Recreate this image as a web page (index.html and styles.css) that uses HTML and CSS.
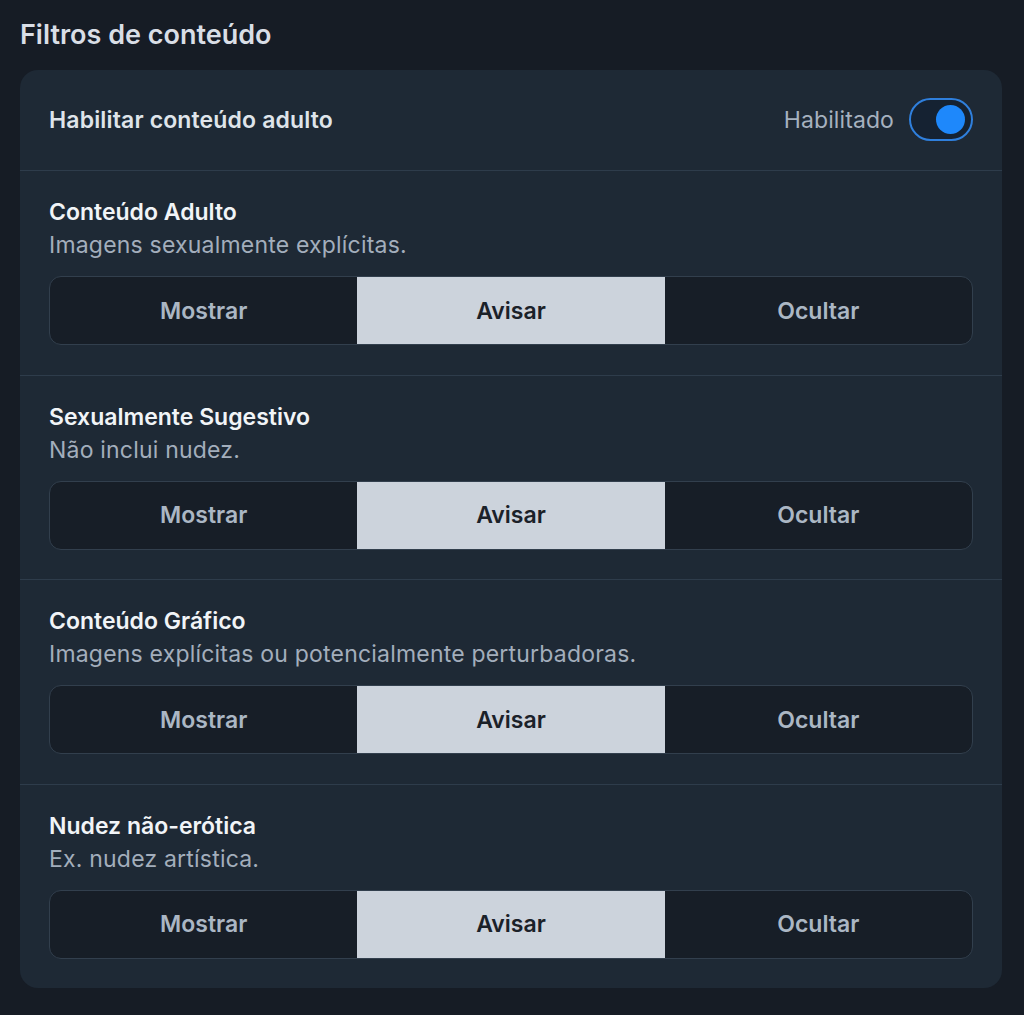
FILE: index.html
```html
<!DOCTYPE html>
<html lang="pt">
<head>
<meta charset="utf-8">
<link rel="stylesheet" href="styles.css">
</head>
<body>
<div class="page">
  <h1 class="page-title">Filtros de conteúdo</h1>
  <div class="card">
    <div class="header-row">
      <span class="header-label">Habilitar conteúdo adulto</span>
      <div class="toggle-wrap">
        <span class="toggle-text">Habilitado</span>
        <span class="toggle"><span class="knob"></span></span>
      </div>
    </div>
    <div class="section">
      <div class="sec-title">Conteúdo Adulto</div>
      <div class="sec-desc">Imagens sexualmente explícitas.</div>
      <div class="seg">
        <div class="seg-btn">Mostrar</div>
        <div class="seg-btn active">Avisar</div>
        <div class="seg-btn">Ocultar</div>
      </div>
    </div>
    <div class="section">
      <div class="sec-title">Sexualmente Sugestivo</div>
      <div class="sec-desc">Não inclui nudez.</div>
      <div class="seg">
        <div class="seg-btn">Mostrar</div>
        <div class="seg-btn active">Avisar</div>
        <div class="seg-btn">Ocultar</div>
      </div>
    </div>
    <div class="section">
      <div class="sec-title">Conteúdo Gráfico</div>
      <div class="sec-desc">Imagens explícitas ou potencialmente perturbadoras.</div>
      <div class="seg">
        <div class="seg-btn">Mostrar</div>
        <div class="seg-btn active">Avisar</div>
        <div class="seg-btn">Ocultar</div>
      </div>
    </div>
    <div class="section last">
      <div class="sec-title">Nudez não-erótica</div>
      <div class="sec-desc">Ex. nudez artística.</div>
      <div class="seg">
        <div class="seg-btn">Mostrar</div>
        <div class="seg-btn active">Avisar</div>
        <div class="seg-btn">Ocultar</div>
      </div>
    </div>
  </div>
</div>
</body>
</html>
```
FILE: styles.css
```css
* { box-sizing: border-box; }
html, body {
  margin: 0;
  padding: 0;
  background: #161c25;
  font-family: Inter, "Noto Sans", "Liberation Sans", sans-serif;
}
.page {
  padding: 18px 22px 0 20px;
}
.page-title {
  margin: 0;
  font-size: 27px;
  line-height: 34px;
  font-weight: 600;
  color: #d9dee6;
}
.card {
  margin-top: 18px;
  background: #1e2935;
  border-radius: 18px;
  overflow: hidden;
}
.header-row {
  height: 101px;
  display: flex;
  align-items: center;
  justify-content: space-between;
  padding: 0 29px 1px 29px;
  border-bottom: 1px solid #2e3c4b;
}
.header-label {
  font-size: 23px;
  font-weight: 600;
  color: #dfe4ea;
  letter-spacing: 0.15px;
}
.toggle-wrap {
  display: flex;
  align-items: center;
  gap: 15px;
}
.toggle-text {
  font-size: 23px;
  color: #a6b1bf;
  letter-spacing: 0.1px;
}
.toggle {
  width: 64px;
  height: 43px;
  border-radius: 22px;
  border: 2px solid #2f7fdc;
  background: #152232;
  display: flex;
  align-items: center;
  justify-content: flex-end;
  padding-right: 6px;
}
.knob {
  width: 29px;
  height: 29px;
  border-radius: 50%;
  background: #1e88fb;
}
.section {
  padding: 26px 29px 29.5px 29px;
  border-bottom: 1px solid #2e3c4b;
}
.section.last {
  border-bottom: none;
  padding-bottom: 29px;
}
.sec-title {
  font-size: 23px;
  line-height: 30px;
  font-weight: 600;
  color: #f1f4f7;
}
.sec-desc {
  margin-top: 3px;
  font-size: 23px;
  line-height: 30px;
  color: #a3aebc;
  letter-spacing: 0.2px;
}
.seg {
  margin-top: 16px;
  height: 69px;
  display: grid;
  grid-template-columns: 1fr 1fr 1fr;
  border: 1.5px solid #323f4d;
  border-radius: 12px;
  overflow: hidden;
  background: #171e27;
}
.seg-btn {
  display: flex;
  align-items: center;
  justify-content: center;
  font-size: 23px;
  font-weight: 600;
  color: #abb7c4;
}
.seg-btn.active {
  background: #ccd3dc;
  color: #1b2129;
}
```
